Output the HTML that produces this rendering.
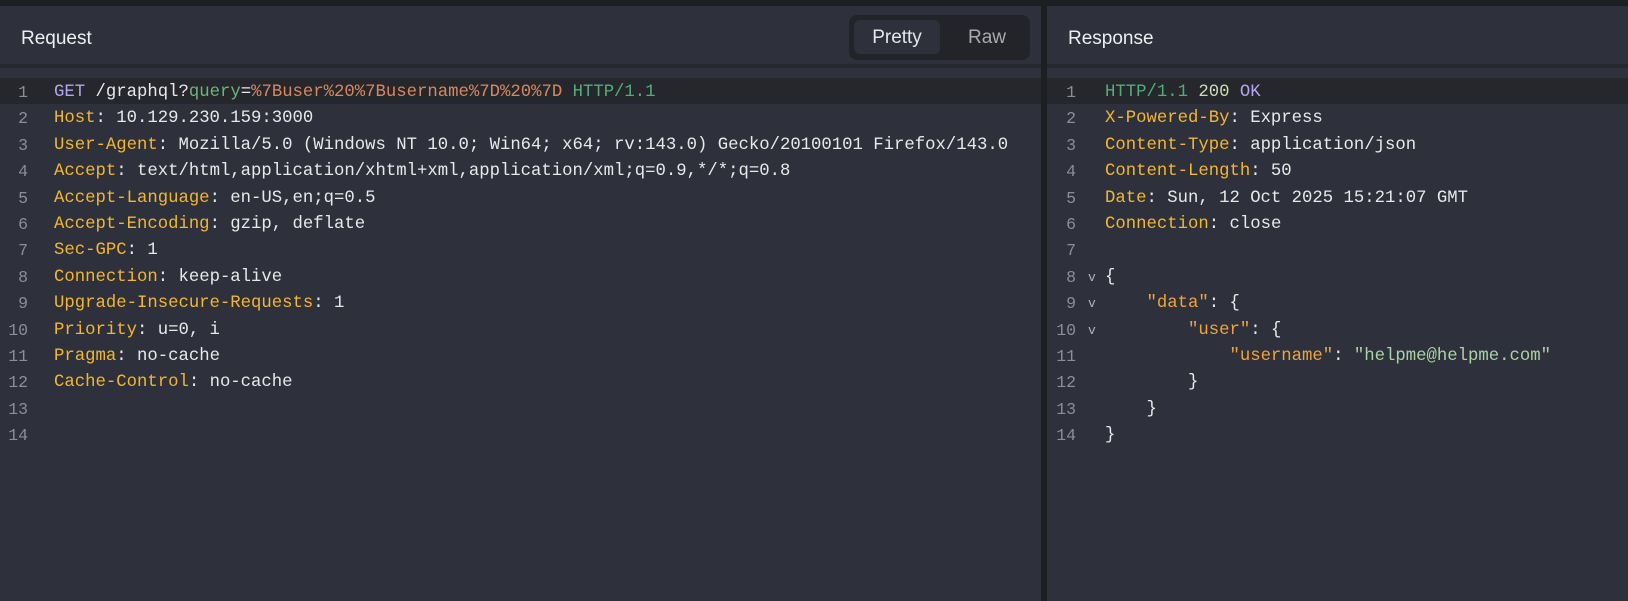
<!DOCTYPE html>
<html><head><meta charset="utf-8"><style>
*{margin:0;padding:0;box-sizing:border-box}
body{width:1628px;height:601px;background:#1e1f23;overflow:hidden;position:relative;font-family:"Liberation Sans",sans-serif}
.panel{position:absolute;top:6px;bottom:0;background:#2e313b}
.hdr{position:absolute;left:0;right:0;top:0;height:62px;background:#2e313b;border-bottom:4px solid #26282e}
.title{position:absolute;top:22px;font-size:19px;color:#eceef2}
.code{position:absolute;top:72px;left:0;right:0;font-family:"Liberation Mono",monospace;font-size:17.3px}
.ln{height:26.4px;line-height:24.4px;padding-top:3px;white-space:pre;position:relative;color:#e8e8ea}
.ln.hl{background:#25272c}
.n{position:absolute;text-align:right;color:#8b8e96;font-size:16.5px}
.k{color:#f2b630}.g{color:#6cb47c}.s{color:#d8875f}.p{color:#b4a4f2}.h{color:#4fae7c}.c{color:#cfdcb4}.j{color:#f1a33a}.v{color:#a9d3a3}
.chev{position:absolute;left:41px;color:#b0b3ba;font-size:13px}
.tog{position:absolute;left:849px;top:9px;width:181px;height:45px;background:#232429;border-radius:8px}
.tog .pr{position:absolute;left:5px;top:5px;width:86px;height:34px;background:#2e313b;border-radius:6px;color:#e4e6ee;font-size:19px;text-align:center;line-height:36px}
.tog .rw{position:absolute;left:100px;top:5px;width:76px;height:34px;color:#a8aab0;font-size:19px;text-align:center;line-height:36px}
</style></head><body>
<div class="panel" style="left:0;width:1041px">
<div class="hdr"><div class="title" style="left:21px">Request</div>
<div class="tog"><div class="pr">Pretty</div><div class="rw">Raw</div></div></div>
<div class="code">
<div class="ln hl" style="padding-left:54px"><span class="n" style="left:0;width:28px">1</span><span class="p">GET</span> /graphql?<span class="g">query</span>=<span class="s">%7Buser%20%7Busername%7D%20%7D</span> <span class="h">HTTP/1.1</span></div>
<div class="ln" style="padding-left:54px"><span class="n" style="left:0;width:28px">2</span><span class="k">Host</span>: 10.129.230.159:3000</div>
<div class="ln" style="padding-left:54px"><span class="n" style="left:0;width:28px">3</span><span class="k">User-Agent</span>: Mozilla/5.0 (Windows NT 10.0; Win64; x64; rv:143.0) Gecko/20100101 Firefox/143.0</div>
<div class="ln" style="padding-left:54px"><span class="n" style="left:0;width:28px">4</span><span class="k">Accept</span>: text/html,application/xhtml+xml,application/xml;q=0.9,*/*;q=0.8</div>
<div class="ln" style="padding-left:54px"><span class="n" style="left:0;width:28px">5</span><span class="k">Accept-Language</span>: en-US,en;q=0.5</div>
<div class="ln" style="padding-left:54px"><span class="n" style="left:0;width:28px">6</span><span class="k">Accept-Encoding</span>: gzip, deflate</div>
<div class="ln" style="padding-left:54px"><span class="n" style="left:0;width:28px">7</span><span class="k">Sec-GPC</span>: 1</div>
<div class="ln" style="padding-left:54px"><span class="n" style="left:0;width:28px">8</span><span class="k">Connection</span>: keep-alive</div>
<div class="ln" style="padding-left:54px"><span class="n" style="left:0;width:28px">9</span><span class="k">Upgrade-Insecure-Requests</span>: 1</div>
<div class="ln" style="padding-left:54px"><span class="n" style="left:0;width:28px">10</span><span class="k">Priority</span>: u=0, i</div>
<div class="ln" style="padding-left:54px"><span class="n" style="left:0;width:28px">11</span><span class="k">Pragma</span>: no-cache</div>
<div class="ln" style="padding-left:54px"><span class="n" style="left:0;width:28px">12</span><span class="k">Cache-Control</span>: no-cache</div>
<div class="ln" style="padding-left:54px"><span class="n" style="left:0;width:28px">13</span></div>
<div class="ln" style="padding-left:54px"><span class="n" style="left:0;width:28px">14</span></div>
</div></div>
<div class="panel" style="left:1047px;right:0">
<div class="hdr"><div class="title" style="left:21px">Response</div></div>
<div class="code">
<div class="ln hl" style="padding-left:58px"><span class="n" style="left:0;width:29px">1</span><span class="h">HTTP/1.1</span> <span class="c">200</span> <span class="p">OK</span></div>
<div class="ln" style="padding-left:58px"><span class="n" style="left:0;width:29px">2</span><span class="k">X-Powered-By</span>: Express</div>
<div class="ln" style="padding-left:58px"><span class="n" style="left:0;width:29px">3</span><span class="k">Content-Type</span>: application/json</div>
<div class="ln" style="padding-left:58px"><span class="n" style="left:0;width:29px">4</span><span class="k">Content-Length</span>: 50</div>
<div class="ln" style="padding-left:58px"><span class="n" style="left:0;width:29px">5</span><span class="k">Date</span>: Sun, 12 Oct 2025 15:21:07 GMT</div>
<div class="ln" style="padding-left:58px"><span class="n" style="left:0;width:29px">6</span><span class="k">Connection</span>: close</div>
<div class="ln" style="padding-left:58px"><span class="n" style="left:0;width:29px">7</span></div>
<div class="ln" style="padding-left:58px"><span class="n" style="left:0;width:29px">8</span><span class="chev">v</span>{</div>
<div class="ln" style="padding-left:58px"><span class="n" style="left:0;width:29px">9</span><span class="chev">v</span>    <span class="j">"data"</span>: {</div>
<div class="ln" style="padding-left:58px"><span class="n" style="left:0;width:29px">10</span><span class="chev">v</span>        <span class="j">"user"</span>: {</div>
<div class="ln" style="padding-left:58px"><span class="n" style="left:0;width:29px">11</span>            <span class="j">"username"</span>: <span class="v">"helpme@helpme.com"</span></div>
<div class="ln" style="padding-left:58px"><span class="n" style="left:0;width:29px">12</span>        }</div>
<div class="ln" style="padding-left:58px"><span class="n" style="left:0;width:29px">13</span>    }</div>
<div class="ln" style="padding-left:58px"><span class="n" style="left:0;width:29px">14</span>}</div>
</div></div>
</body></html>
